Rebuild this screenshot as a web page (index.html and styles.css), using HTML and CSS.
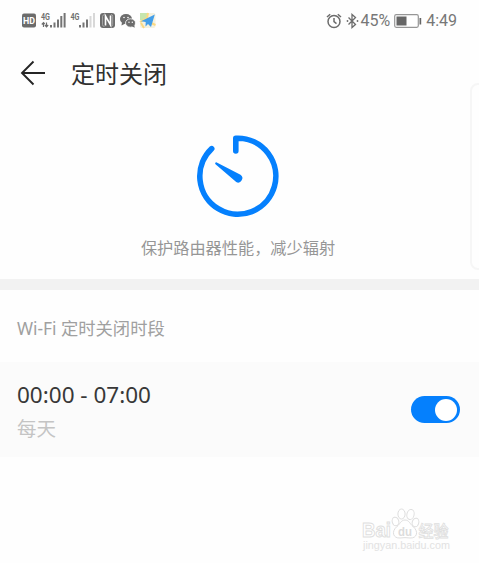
FILE: index.html
```html
<!DOCTYPE html>
<html lang="zh-CN">
<head>
  <meta charset="UTF-8" />
  <meta name="viewport" content="width=device-width, initial-scale=1.0" />
  <title>定时关闭</title>
  <link rel="stylesheet" href="styles.css">
</head>
<body>
  <div class="screen">
    <div class="statusbar">
      <svg class="status-left" width="140" height="24" viewBox="0 0 140 24">
        <!-- HD -->
        <rect x="2" y="5.500" width="14" height="14" rx="2" fill="#6c6c6c"/>
        <text x="3" y="16" class="hd" textLength="12" lengthAdjust="spacingAndGlyphs">HD</text>
        <!-- SIM 1 -->
        <text x="21" y="11.500" class="net" textLength="9" lengthAdjust="spacingAndGlyphs">4G</text>
        <path d="M23.5 19v-4M21.8 16.500l1.700-1.800 1.200 1.300M26.500 14.500v4M25 17l1.500 1.800 1.700-1.800" fill="none" stroke="#6c6c6c" stroke-width="1.200"/>
        <path d="M31 19.500v-2.500M34.500 19.500v-5M38 19.500v-8M41.300 19.500V8M44.600 19.500V5" stroke="#747474" stroke-width="2"/>
        <!-- SIM 2 -->
        <text x="50.500" y="11.500" class="net" textLength="9" lengthAdjust="spacingAndGlyphs">4G</text>
        <path d="M60 19.500v-2.500M63.500 19.500v-5M67 19.500v-8" stroke="#747474" stroke-width="2"/>
        <path d="M70.500 19.500V8M74 19.500V5" stroke="#d8d8d8" stroke-width="2"/>
        <!-- NFC -->
        <rect x="80" y="5" width="15" height="15" rx="3" fill="#6c6c6c"/>
        <path d="M85.500 17.500V8l5 9V7.500" fill="none" stroke="#fff" stroke-width="1.600"/>
        <path d="M85 6.500q-2.500 0-2.500 2v8q0 2 2 2M91 6.500q1.700 0 1.700 2v8q0 2-2.200 2" fill="none" stroke="#bbb" stroke-width=".7"/>
        <!-- chat -->
        <ellipse cx="106" cy="11" rx="6" ry="5" fill="#6c6c6c"/>
        <path d="M102 14l-.5 3.500 4-2z" fill="#6c6c6c"/>
        <ellipse cx="110.500" cy="15" rx="5" ry="4.200" fill="#6c6c6c" stroke="#fff" stroke-width=".8"/>
        <path d="M112 18.300l2.700 1.500-.4-3z" fill="#6c6c6c"/>
        <circle cx="104" cy="9.500" r=".8" fill="#fff"/><circle cx="108" cy="9.500" r=".8" fill="#fff"/>
        <circle cx="109" cy="14.200" r=".7" fill="#fff"/><circle cx="112.300" cy="14.200" r=".7" fill="#fff"/>
        <!-- map -->
        <rect x="120" y="5" width="15.500" height="15" rx="2" fill="#f5f1df"/>
        <path d="M120 5h8v4l-5 3h-3z" fill="#c7e6ae"/>
        <path d="M128 5l-1 5-7 4M131 15l4.500 2M124 20l-3-5" fill="none" stroke="#fbd982" stroke-width="2"/>
        <path d="M134.800 6.500L131 19l-3-3-2.500 2.500.2-4.500-4.700-.8z" fill="#439ee9"/>
      </svg>
      <div class="status-right">
        <svg width="34" height="20" viewBox="0 0 34 20">
          <g fill="none" stroke="#6c6c6c" stroke-width="1.500">
            <circle cx="8" cy="10.500" r="6"/>
            <path d="M8 7v3.700l2.500 2M1 6l3.200-2.800M15 6l-3.200-2.800"/>
            <path d="M22.500 6.500l7 7-3.500 3v-13l3.500 3-7 7" stroke-width="1.300"/>
          </g>
          <circle cx="21.500" cy="10" r=".9" fill="#6c6c6c"/><circle cx="31.500" cy="10" r=".9" fill="#6c6c6c"/>
        </svg>
        <span>45%</span>
        <svg class="battery" width="28" height="14" viewBox="0 0 28 14">
          <rect x=".7" y=".7" width="23.600" height="12.600" rx="1.500" fill="#fff" stroke="#969696" stroke-width="1.200"/>
          <rect x="2.500" y="2.500" width="10" height="9" fill="#666"/>
          <rect x="25.500" y="4" width="1.700" height="6.500" fill="#666"/>
        </svg>
        <span class="clock">4:49</span>
      </div>
    </div>

    <div class="header">
      <svg width="26" height="26" viewBox="0 0 26 26">
        <path d="M13.500 1.500L2 13l11.500 11.500M2 13h23" fill="none" stroke="#252525" stroke-width="1.900"/>
      </svg>
      <h1>定时关闭</h1>
    </div>

    <div class="hero">
      <svg width="84" height="84" viewBox="0 0 84 84">
        <path d="M39.800 17V4.200H42A38 38 0 1 1 15.700 14.600" fill="none" stroke="#0580fd" stroke-width="5.600" stroke-linecap="round" stroke-linejoin="round"/>
        <path d="M20.300 28.300L44.500 40.700a4.300 4.300 0 0 1-4.300 7.400L19.500 30.200a1.100 1.100 0 0 1 .8-1.900z" fill="#0580fd"/>
      </svg>
      <p>保护路由器性能，减少辐射</p>
    </div>

    <h2 class="section-title">Wi-Fi 定时关闭时段</h2>

    <div class="period">
      <div>
        <div class="time">00:00 - 07:00</div>
        <div class="repeat">每天</div>
      </div>
      <div class="switch"><span class="knob"></span></div>
    </div>

    <div class="side-panel"></div>

    <svg class="watermark" width="96" height="46" viewBox="0 0 96 46">
      <g fill="#fff" stroke="#dedede" stroke-width="1">
        <text x="2" y="30" class="wm-name" textLength="29" lengthAdjust="spacingAndGlyphs">Bai</text>
        <ellipse cx="35.500" cy="14.500" rx="3.300" ry="4.300" transform="rotate(-15 35.500 14.500)"/>
        <ellipse cx="41.500" cy="7" rx="3.600" ry="5"/>
        <ellipse cx="50.500" cy="7.500" rx="3.600" ry="5" transform="rotate(12 50.500 7.500)"/>
        <ellipse cx="55.500" cy="15.500" rx="3.300" ry="4.300" transform="rotate(15 55.500 15.500)"/>
        <path d="M45 13c4 0 5 4 8 6.500 6 5 4 12-3 11.500q-5-.8-10 0c-7 .5-9-6.500-3-11.500 3-2.500 4-6.500 8-6.500z"/>
        <text x="58.500" y="30" class="wm-cn" textLength="30" lengthAdjust="spacingAndGlyphs">经验</text>
      </g>
      <text x="38" y="28.500" class="wm-du" textLength="14" lengthAdjust="spacingAndGlyphs">du</text>
      <text x="3" y="42" class="wm-url" textLength="87" lengthAdjust="spacingAndGlyphs">jingyan.baidu.com</text>
    </svg>
  </div>
</body>
</html>
```

FILE: styles.css
```css
body {
  margin: 0;
  background: #fefefe;
  font-family: "Noto Sans", "Noto Sans CJK SC", sans-serif;
}
.screen {
  position: relative;
  height: 563px;
  overflow: hidden;
}
.statusbar {
  display: flex;
  justify-content: space-between;
  align-items: center;
  height: 40px;
  padding: 0 22px 0 20px;
}
.status-left {
  font-family: Roboto, sans-serif;
}
.hd {
  font-size: 9.5px;
  font-weight: bold;
  fill: #fff;
}
.net {
  font-size: 9.5px;
  font-weight: bold;
  fill: #707070;
}
.status-right {
  display: flex;
  align-items: center;
  padding-top: 1px;
  font-family: Roboto, sans-serif;
  font-size: 16px;
  color: #777;
}
.battery {
  margin: 0 4px;
}
.header {
  display: flex;
  align-items: center;
  gap: 25px;
  height: 66px;
  padding-left: 20px;
}
.header h1 {
  margin: 2px 0 0;
  font-size: 24px;
  line-height: 30px;
  font-weight: normal;
  color: #303030;
}
.hero {
  display: flex;
  flex-direction: column;
  align-items: center;
  height: 145px;
  padding-top: 28px;
  padding-right: 3px;
  border-bottom: 11px solid #f2f2f2;
}
.hero p {
  margin: 18px 0 0;
  font-size: 16.2px;
  line-height: 24px;
  color: #969696;
}
.section-title {
  margin: 0;
  padding-left: 17px;
  height: 72px;
  line-height: 77px;
  font-size: 17.3px;
  font-weight: normal;
  color: #a0a0a0;
}
.period {
  display: flex;
  justify-content: space-between;
  align-items: center;
  height: 95px;
  padding: 0 19px 0 17px;
  background: #fbfbfb;
}
.time {
  padding-top: 3px;
  font-size: 22.5px;
  line-height: 34px;
  color: #383838;
}
.repeat {
  font-size: 19.5px;
  line-height: 33px;
  color: #c4c4c4;
}
.switch {
  display: flex;
  justify-content: flex-end;
  align-items: center;
  box-sizing: border-box;
  width: 49px;
  height: 27px;
  padding-right: 3px;
  border-radius: 14px;
  background: #0580fd;
}
.knob {
  width: 22px;
  height: 22px;
  border-radius: 50%;
  background: #fff;
}
.side-panel {
  position: absolute;
  top: 83px;
  right: -13px;
  width: 18px;
  height: 183px;
  border: 2px solid #f6f6f6;
  border-radius: 8px;
  background: #fefefe;
}
.watermark {
  position: absolute;
  left: 360px;
  top: 507px;
}
.wm-name {
  font: bold 21px "Liberation Sans", sans-serif;
}
.wm-du {
  font: bold 12px "Liberation Sans", sans-serif;
  fill: #dcdcdc;
}
.wm-cn {
  font: 500 16px "Noto Sans CJK SC", sans-serif;
  stroke-width: 0.8px;
}
.wm-url {
  font: 10px "Liberation Sans", sans-serif;
  fill: #e2e2e2;
}
```
